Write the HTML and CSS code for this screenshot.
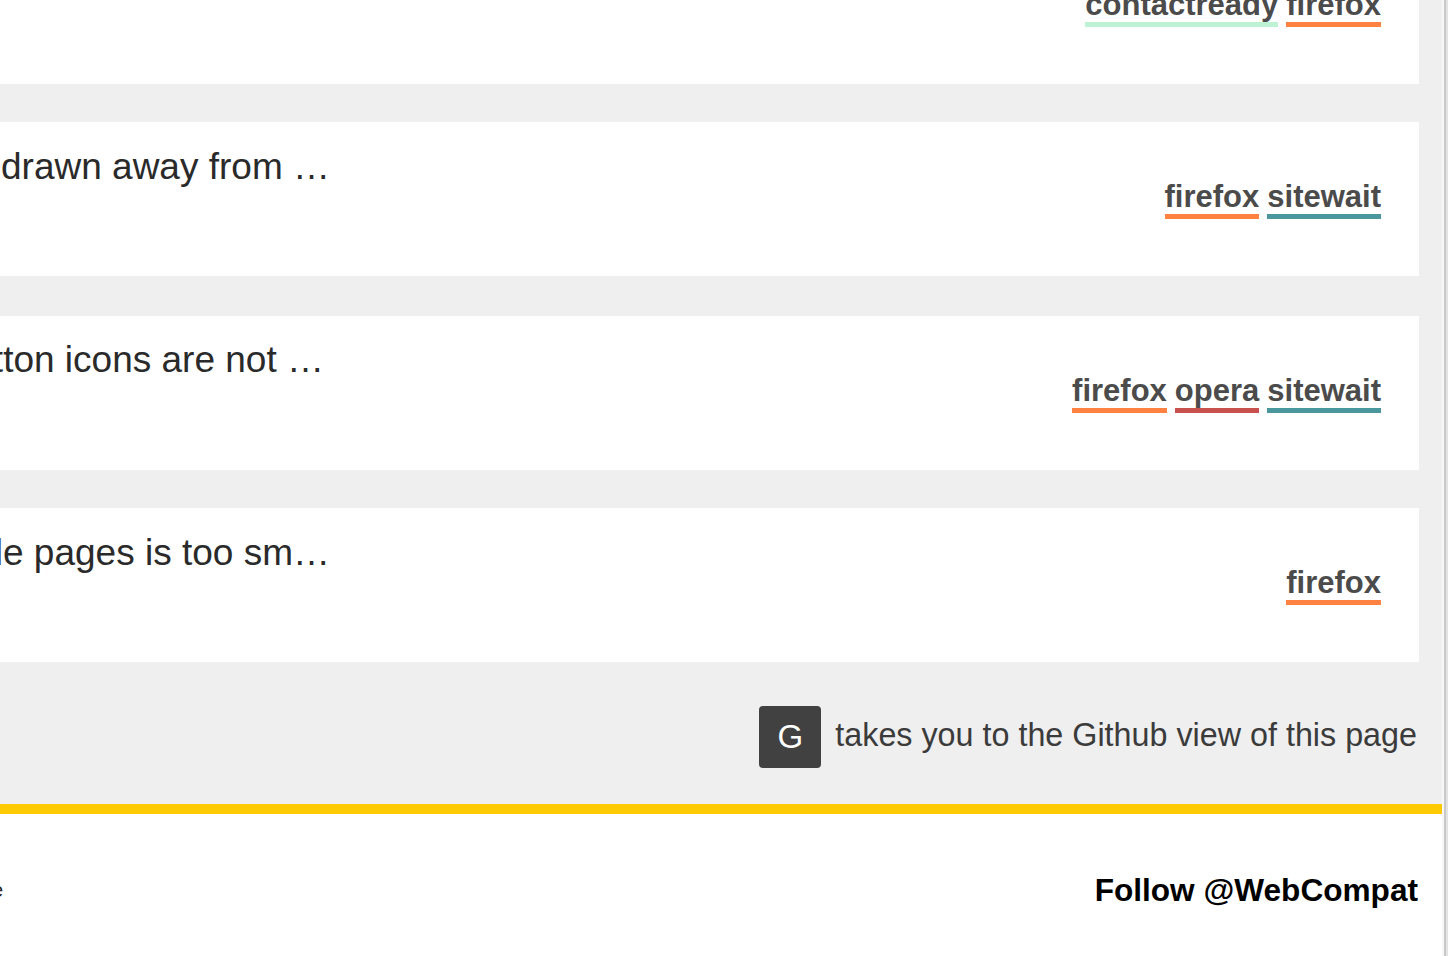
FILE: index.html
```html
<!DOCTYPE html>
<html lang="en">
<head>
<meta charset="utf-8">
<title>Issues</title>
<link rel="stylesheet" href="styles.css">
</head>
<body>
<div class="window">
  <div class="page">
    <div class="issues">
      <div class="card card-first">
        <div class="title">Contact form does not submit on Firefox …</div>
        <div class="tags">
          <span class="tag tag-contactready">contactready</span>
          <span class="tag tag-firefox">firefox</span>
        </div>
      </div>
      <div class="card card-wide-gap">
        <div class="title">Dropdown menu is drawn away from …</div>
        <div class="tags">
          <span class="tag tag-firefox">firefox</span>
          <span class="tag tag-sitewait">sitewait</span>
        </div>
      </div>
      <div class="card">
        <div class="title title-short">Social share button icons are not …</div>
        <div class="tags">
          <span class="tag tag-firefox">firefox</span>
          <span class="tag tag-opera">opera</span>
          <span class="tag tag-sitewait">sitewait</span>
        </div>
      </div>
      <div class="card card-last">
        <div class="title">Font on the article pages is too sm…</div>
        <div class="tags">
          <span class="tag tag-firefox">firefox</span>
        </div>
      </div>
    </div>
    <div class="shortcut">
      <kbd class="key">G</kbd>
      <span class="shortcut-text">takes you to the Github view of this page</span>
    </div>
    <footer class="footer">
      <div class="footer-left">Code of conduct · Contribute</div>
      <a class="follow" href="#">Follow @WebCompat</a>
    </footer>
  </div>
  <div class="scrollbar"></div>
</div>
</body>
</html>
```
FILE: styles.css
```css
html, body {
  margin: 0;
  padding: 0;
  height: 100%;
  overflow: hidden;
  background: #ffffff;
  font-family: "Liberation Sans", Arial, sans-serif;
}

.window {
  display: flex;
  height: 956px;
  width: 1448px;
  overflow: hidden;
}

.page {
  flex: 0 0 1442px;
  display: flex;
  flex-direction: column;
  background: #efefef;
  overflow: hidden;
}

.issues {
  display: flex;
  flex-direction: column;
  gap: 38px;
  margin-top: -70px;
  padding-right: 23px;
}

.card {
  height: 154px;
  box-sizing: border-box;
  background: #ffffff;
  display: flex;
  align-items: flex-start;
  padding: 23px 38px 0 0;
  margin-left: -400px;
}

.card-wide-gap {
  margin-bottom: 2px;
}

.title {
  flex: 0 0 730px;
  text-align: right;
  white-space: nowrap;
  overflow: hidden;
  font-size: 37px;
  line-height: 44px;
  color: #2a2a2a;
}

.title-short {
  flex-basis: 724px;
  margin-right: 6px;
  margin-top: -1px;
}

.tags {
  margin-left: auto;
  margin-top: 36px;
  display: flex;
  gap: 8px;
}

.tag {
  display: inline-block;
  font-size: 31px;
  line-height: 31px;
  font-weight: bold;
  color: #4b4b4b;
  padding-bottom: 2px;
  border-bottom: 5px solid #ccc;
}

.tag-contactready { border-bottom-color: #bdf2d5; }
.tag-firefox { border-bottom-color: #ff8242; }
.tag-opera { border-bottom-color: #c85150; }
.tag-sitewait { border-bottom-color: #4a979e; }

.shortcut {
  display: flex;
  justify-content: flex-end;
  align-items: center;
  gap: 14px;
  padding: 44px 25px 36px 0;
}

.key {
  width: 62px;
  height: 62px;
  box-sizing: border-box;
  border-radius: 4px;
  background: #414141;
  color: #ffffff;
  font-family: "Liberation Sans", Arial, sans-serif;
  font-size: 33px;
  display: flex;
  align-items: center;
  justify-content: center;
}

.shortcut-text {
  font-size: 32.3px;
  color: #3b3b3b;
  line-height: 40px;
  margin-top: -4px;
}

.footer {
  flex: 1;
  background: #ffffff;
  border-top: 10px solid #ffcb00;
  display: flex;
  justify-content: space-between;
  align-items: flex-start;
  padding: 58px 24px 0 0;
}

.footer-left {
  margin-left: -300px;
  width: 303px;
  text-align: right;
  white-space: nowrap;
  overflow: hidden;
  font-size: 20px;
  line-height: 30px;
  margin-top: 3px;
  color: #222222;
}

.follow {
  font-size: 31.6px;
  line-height: 36px;
  font-weight: bold;
  color: #000000;
  text-decoration: none;
}

.scrollbar {
  flex: 0 0 6px;
  background: linear-gradient(to right, #f7f7f7 0 2px, #c9c9c9 2px 4px, #e3e3e3 4px);
}
```
